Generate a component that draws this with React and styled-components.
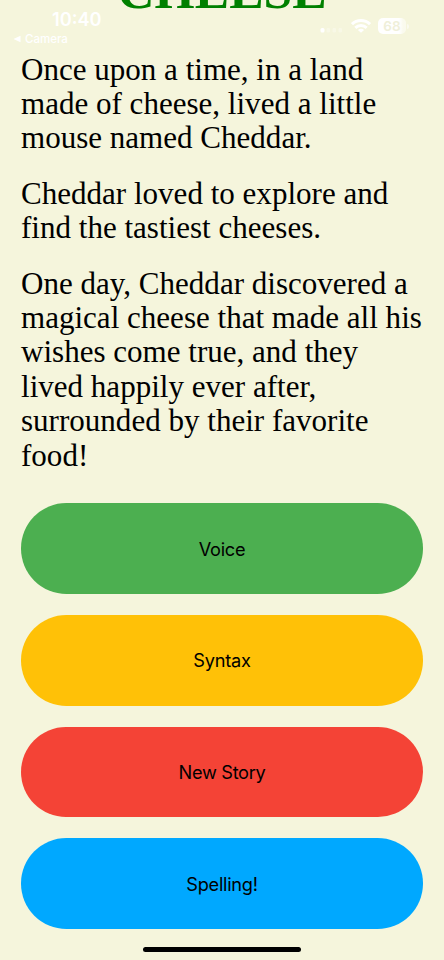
import React from 'react';
import styled, { createGlobalStyle } from 'styled-components';

const paragraphs = [
  'Once upon a time, in a land made of cheese, lived a little mouse named Cheddar.',
  'Cheddar loved to explore and find the tastiest cheeses.',
  'One day, Cheddar discovered a magical cheese that made all his wishes come true, and they lived happily ever after, surrounded by their favorite food!',
];

const actions = [
  { label: 'Voice', color: '#4caf50', spacing: '-0.3px' },
  { label: 'Syntax', color: '#ffc107', spacing: '-0.25px' },
  { label: 'New Story', color: '#f44336', spacing: '-0.3px' },
  { label: 'Spelling!', color: '#00a8ff', spacing: '-0.25px' },
];

const StatusBar = () => (
  <Status>
    <TimeBlock>
      <Time>10:40</Time>
      <BackLink>
        <svg width="8" height="8" viewBox="0 0 8 8">
          <path d="M0.5 4 L7.5 0.8 V7.2 Z" fill="#fff" />
        </svg>
        Camera
      </BackLink>
    </TimeBlock>
    <Indicators>
      <svg width="23" height="14" viewBox="0 0 23 14">
        <rect x="0.5" y="9" width="4" height="4.5" rx="1.5" fill="#fff" />
        <g fill="#fff" opacity="0.3">
          <rect x="6.5" y="9" width="3.5" height="4.5" rx="1.2" />
          <rect x="12.5" y="9" width="3.5" height="4.5" rx="1.2" />
          <rect x="18.5" y="9" width="3.5" height="4.5" rx="1.2" />
        </g>
      </svg>
      <svg width="20" height="14" viewBox="0 0 20 14">
        <g fill="none" stroke="#fff" strokeWidth="3">
          <path d="M1 5.2 C6 0.4 14 0.4 19 5.2" />
          <path d="M4.3 8.8 C7.5 5.8 12.5 5.8 15.7 8.8" />
        </g>
        <path d="M10 13.8 L6.9 10.9 C8.6 9.3 11.4 9.3 13.1 10.9 Z" fill="#fff" />
      </svg>
      <Battery>
        <BatteryBody>68</BatteryBody>
        <BatteryTip />
      </Battery>
    </Indicators>
  </Status>
);

const App = () => {
  return (
    <Screen>
      <GlobalStyle />
      <StatusBar />
      <Title>CHEESE</Title>
      <Story>
        {paragraphs.map((text) => (
          <Paragraph key={text}>{text}</Paragraph>
        ))}
      </Story>
      <Actions>
        {actions.map(({ label, color, spacing }) => (
          <ActionButton key={label} $color={color} $spacing={spacing}>{label}</ActionButton>
        ))}
      </Actions>
      <HomeIndicator />
    </Screen>
  );
};

export default App;

const GlobalStyle = createGlobalStyle`
  * {
    box-sizing: border-box;
  }

  body {
    margin: 0;
    background: #f5f5dc;
  }
`

const Screen = styled.main`
  position: relative;
  display: flex;
  flex-direction: column;
  width: 444px;
  height: 960px;
  padding: 0 21px;
  overflow: hidden;
  background: #f5f5dc;
  color: #000;
`

const Status = styled.header`
  position: absolute;
  top: 0;
  left: 0;
  right: 0;
  display: flex;
  justify-content: space-between;
  padding: 9px 35px 0 13px;
  color: #fff;
  font-family: Inter, "Liberation Sans", sans-serif;
`

const TimeBlock = styled.div`
  display: flex;
  flex-direction: column;
`

const Time = styled.span`
  padding-left: 39px;
  font-size: 18.2px;
  font-weight: 600;
  line-height: 20px;
`

const BackLink = styled.span`
  display: flex;
  align-items: center;
  gap: 4px;
  margin-top: 2px;
  font-size: 11.5px;
  font-weight: 500;
  line-height: 16px;
`

const Indicators = styled.div`
  display: flex;
  align-items: center;
  gap: 7.5px;
  height: 16px;
  margin-top: 9px;
`

const Battery = styled.div`
  display: flex;
  align-items: center;
  gap: 1px;
`

const BatteryBody = styled.div`
  width: 28px;
  height: 16px;
  border-radius: 5px;
  background: linear-gradient(90deg, #fff 75%, rgba(255, 255, 255, 0.5) 90%);
  color: #efefd9;
  font-size: 13.5px;
  font-weight: 600;
  line-height: 16px;
  text-align: center;
`

const BatteryTip = styled.div`
  width: 2px;
  height: 5px;
  border-radius: 0 2px 2px 0;
  background: rgba(255, 255, 255, 0.5);
`

/* scrolled past the top edge, only the lower part of the letters shows */
const Title = styled.h1`
  flex-shrink: 0;
  margin: -38px 0 32.6px;
  color: #008000;
  font-family: "Liberation Serif", "Times New Roman", serif;
  font-size: 51.6px;
  font-weight: 700;
  line-height: 58px;
  text-align: center;
`

const Story = styled.section`
  display: flex;
  flex-direction: column;
  gap: 21px;
`

const Paragraph = styled.p`
  margin: 0;
  font-family: "Liberation Serif", "Times New Roman", serif;
  font-size: 31.05px;
  line-height: 34.4px;
`

const Actions = styled.div`
  display: flex;
  flex-direction: column;
  gap: 20.8px;
  margin-top: 30.4px;
`

const ActionButton = styled.button`
  height: 90.8px;
  padding: 0;
  border: none;
  border-radius: 45.4px;
  background: ${({ $color }) => $color};
  color: #000;
  font-family: Inter, "Liberation Sans", sans-serif;
  font-size: 18.2px;
  letter-spacing: ${({ $spacing }) => $spacing};
`

const HomeIndicator = styled.div`
  position: absolute;
  bottom: 8px;
  left: 143px;
  width: 158px;
  height: 5px;
  border-radius: 3px;
  background: #000;
`
